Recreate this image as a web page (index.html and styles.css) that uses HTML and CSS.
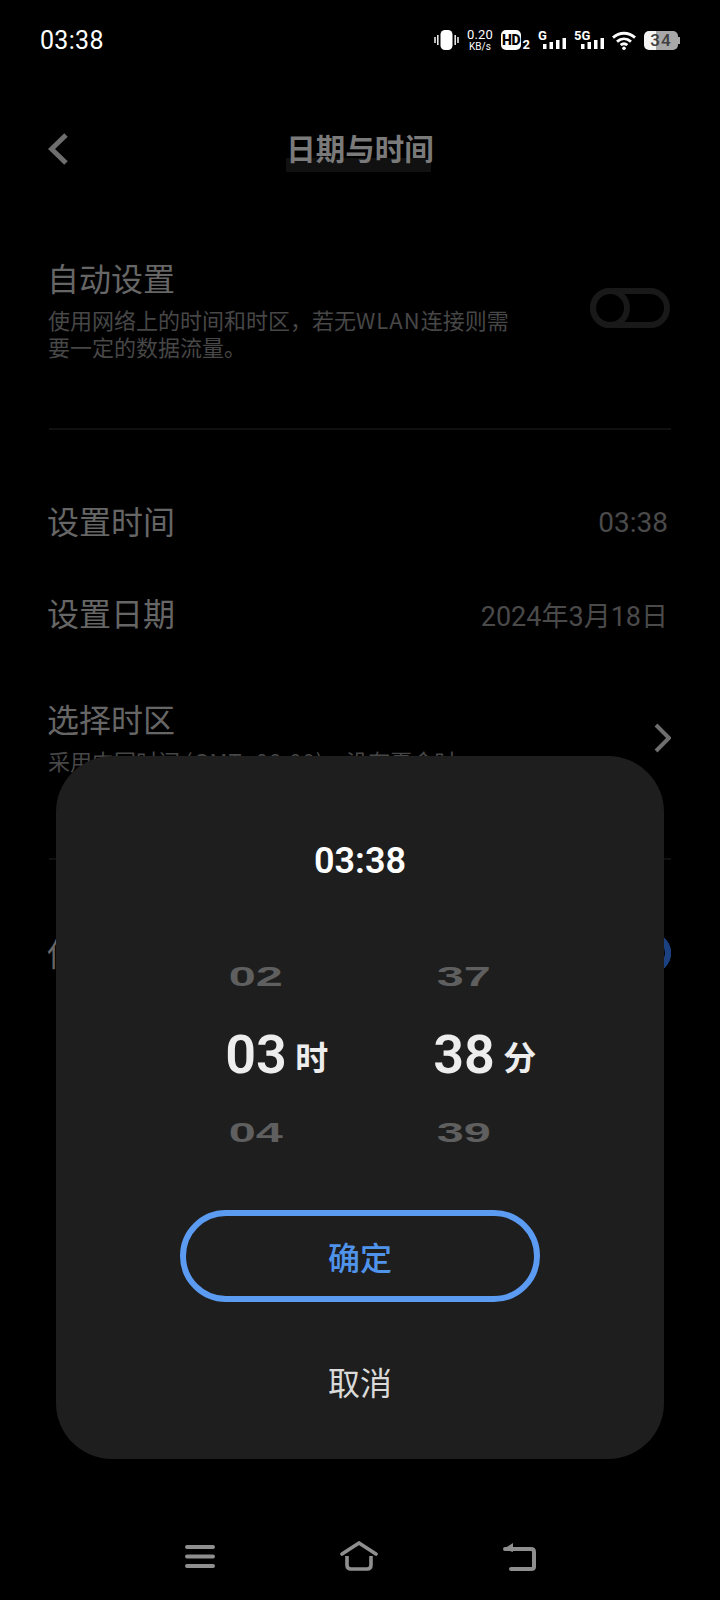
FILE: index.html
```html
<!DOCTYPE html>
<html lang="zh-CN">
<head>
<meta charset="utf-8">
<title>日期与时间</title>
<link rel="stylesheet" href="styles.css">
</head>
<body>
<div class="phone">
  <header class="status">
    <span class="clock">03:38</span>
    <div class="status-icons">
      <svg width="25" height="20" viewBox="0 0 25 20"><rect x="6.500" y="0" width="12" height="20" rx="4.500" fill="#fff"/><path d="M1 7v6M3.800 5v10M21.200 5v10M24 7v6" stroke="#e6e6e6" stroke-width="1.600" fill="none"/></svg>
      <div class="speed"><span class="speed-num">0.20</span><span class="speed-unit">KB/s</span></div>
      <div class="hd"><span class="hd-badge">HD</span><span class="hd-sim">2</span></div>
      <svg width="28" height="24" viewBox="0 -2 28 24"><text class="sig-label" x="0" y="10">G</text><path d="M5 14h3.500v5H5zM11.500 12H15v7h-3.500zM18 10h3.500v9H18zM24.500 8H28v11h-3.500z" fill="#fff"/></svg>
      <svg width="30" height="24" viewBox="0 -2 30 24"><text class="sig-label" x="0" y="10">5G</text><path d="M7 14h3.500v5H7zM13.500 12H17v7h-3.500zM20 10h3.500v9H20zM26.500 8H30v11h-3.500z" fill="#fff"/></svg>
      <svg width="24" height="19" viewBox="0 0 24 19"><g fill="none" stroke="#fff" stroke-width="2.800"><path d="M1 6.600C7.400 .8 16.600 .8 23 6.600"/><path d="M5 10.600c4.200-3.600 9.800-3.600 14 0"/><path d="M8.600 14c2-1.500 4.800-1.500 6.800 0"/></g><circle cx="12" cy="17.200" r="1.800" fill="#fff"/></svg>
      <div class="battery"><span class="battery-level">34</span></div>
    </div>
  </header>

  <div class="topbar">
    <svg class="back" width="20" height="32" viewBox="0 0 20 32"><path d="M18 2 3.500 16 18 30" fill="none" stroke="#6e6e6e" stroke-width="5"/></svg>
    <h1 class="page-title">日期与时间</h1>
  </div>

  <main class="settings">
    <section class="group group-auto">
      <div class="row-auto">
        <div>
          <div class="row-label">自动设置</div>
          <p class="row-note">使用网络上的时间和时区&#xFF0C;若无<span class="latin">WLAN</span>连接则需<br>要一定的数据流量。</p>
        </div>
        <span class="switch"></span>
      </div>
    </section>
    <section class="group group-time">
      <div class="row-plain"><span class="row-label">设置时间</span><span class="row-value">03:38</span></div>
      <div class="row-plain"><span class="row-label">设置日期</span><span class="row-value row-date">2024年3月18日</span></div>
      <div class="row-zone">
        <div>
          <div class="row-label">选择时区</div>
          <p class="row-note">采用中国时间 <span class="latin">(GMT+08:00)</span>&#xFF0C;没有夏令时</p>
        </div>
        <svg width="17" height="30" viewBox="0 0 17 30"><path d="M2 2l13 13L2 28" fill="none" stroke="#6e6e6e" stroke-width="4"/></svg>
      </div>
    </section>
    <section class="group group-clock">
      <div class="row-plain"><span class="row-label">使用24小时制</span><span class="switch switch-on"></span></div>
    </section>
  </main>

  <nav class="navbar">
    <svg width="30" height="24" viewBox="0 0 30 24"><path d="M2 3h26M2 12.500h26M2 22h26" stroke="#8f8f8f" stroke-width="4" stroke-linecap="round" fill="none"/></svg>
    <svg width="38" height="30" viewBox="0 0 38 30"><path d="M2 13 19 2l17 11" fill="none" stroke="#8f8f8f" stroke-width="3.600" stroke-linecap="round"/><path d="M7 15v9q0 4 4 4h16q4 0 4-4v-9" fill="none" stroke="#8f8f8f" stroke-width="3.600"/></svg>
    <svg width="34" height="30" viewBox="0 0 34 30"><path d="M3 8h26q3 0 3 3v15q0 2-3 2H9" fill="none" stroke="#8f8f8f" stroke-width="4" stroke-linecap="round"/><path d="M11 2 1.500 8l9.500 3z" fill="#8f8f8f"/></svg>
  </nav>

  <div class="dialog">
    <div class="dialog-title">03:38</div>
    <div class="wheel">
      <div class="wheel-col">
        <span class="wheel-side">02</span>
        <span class="wheel-main">03<span class="wheel-unit">时</span></span>
        <span class="wheel-side">04</span>
      </div>
      <div class="wheel-col">
        <span class="wheel-side">37</span>
        <span class="wheel-main">38<span class="wheel-unit">分</span></span>
        <span class="wheel-side">39</span>
      </div>
    </div>
    <button class="btn-ok">确定</button>
    <button class="btn-cancel">取消</button>
  </div>
</div>
</body>
</html>
```
FILE: styles.css
```css
*, *::before, *::after { box-sizing: border-box; margin: 0; padding: 0; }

html, body { background: #000; }

body {
  font-family: Roboto, "Noto Sans CJK SC", sans-serif;
}

.phone {
  position: relative;
  width: 720px;
  height: 1600px;
  overflow: hidden;
  background: #000;
  display: flex;
  flex-direction: column;
}

/* Status bar */
.status {
  height: 80px;
  flex: none;
  padding: 0 40px;
  display: flex;
  align-items: center;
  justify-content: space-between;
}

.clock {
  color: #fff;
  font-size: 25px;
  font-weight: 450;
  letter-spacing: .3px;
}

.status-icons {
  display: flex;
  align-items: center;
  gap: 8px;
  color: #fff;
}

.speed {
  width: 26px;
  display: flex;
  flex-direction: column;
  align-items: center;
  line-height: 1;
}

.speed-num { font-size: 13px; letter-spacing: .2px; }
.speed-unit { font-size: 10px; margin-top: 1px; }

.hd {
  width: 29px;
  display: flex;
  align-items: flex-end;
  justify-content: space-between;
}

.hd-badge {
  width: 20px;
  height: 20px;
  border-radius: 5px;
  background: #fff;
  color: #000;
  font-size: 14px;
  font-weight: 900;
  line-height: 20px;
  text-align: center;
  letter-spacing: -.5px;
}

.hd-sim { font-size: 13px; font-weight: 700; line-height: 10px; }

.sig-label {
  fill: #fff;
  font-family: Roboto, sans-serif;
  font-size: 13px;
  font-weight: 700;
}

.battery {
  position: relative;
  width: 34px;
  height: 19px;
  margin-right: 2px;
  border-radius: 5px;
  background: linear-gradient(90deg, #f4f4f4 36%, #a8a8a8 36%);
  color: #3f3f3f;
  font-size: 17px;
  font-weight: 500;
  line-height: 19px;
  text-align: center;
  letter-spacing: 1px;
}

.battery::after {
  content: "";
  position: absolute;
  right: -2px;
  top: 6px;
  width: 2px;
  height: 7px;
  background: #a8a8a8;
}

/* Page header */
.topbar {
  height: 138px;
  flex: none;
  position: relative;
  isolation: isolate;
  display: flex;
  align-items: center;
  justify-content: center;
}

.back {
  position: absolute;
  left: 48px;
  top: 53px;
}

.page-title {
  position: relative;
  padding-top: 2px;
  color: #7a7a7a;
  font-size: 29.500px;
  font-weight: 700;
  line-height: 40px;
}

.page-title::after {
  content: "";
  position: absolute;
  left: 0;
  right: 3px;
  top: 30px;
  height: 14px;
  background: #111;
  z-index: -1;
}

/* Settings list */
.settings {
  flex: 1;
  padding: 0 49px;
}

.group { border-bottom: 2px solid #101010; }

.group-auto { padding: 40px 0 68px; }
.group-time { padding-top: 45px; height: 430px; }
.group-clock { padding-top: 47px; border-bottom: 0; }

.row-auto,
.row-zone {
  display: flex;
  justify-content: space-between;
  align-items: center;
}

.row-auto { padding-right: 1px; }

.row-label {
  margin: 0 0 -2px -2px;
  padding-top: 2px;
  color: #666;
  font-size: 32px;
  line-height: 40px;
}

.row-note {
  margin: 8px 0 0 -1px;
  color: #474747;
  font-family: "Noto Sans CJK SC", sans-serif;
  font-size: 22px;
  line-height: 27px;
  white-space: nowrap;
}

.latin { letter-spacing: 1px; }

.row-plain {
  height: 92px;
  display: flex;
  justify-content: space-between;
  align-items: center;
}

.row-value {
  margin-right: 3px;
  padding-top: 2px;
  color: #4a4a4a;
  font-size: 28px;
}

.row-date { font-size: 27px; }

.row-zone { padding-top: 40px; }
.row-zone svg { margin-top: 2px; }

.switch {
  position: relative;
  display: block;
  width: 80px;
  height: 40px;
  border: 6px solid #191919;
  border-radius: 20px;
}

.row-auto .switch { margin-top: -2px; }

.switch::before {
  content: "";
  position: absolute;
  left: -6px;
  top: -6px;
  width: 40px;
  height: 40px;
  border: 6px solid #191919;
  border-radius: 50%;
}

.switch-on { border-color: #1c4180; }
.switch-on::before { left: auto; right: -6px; border-color: #1c4180; }

/* Bottom navigation */
.navbar {
  height: 100px;
  flex: none;
  padding: 41px 184px 29px 185px;
  display: flex;
  justify-content: space-between;
  align-items: center;
}

/* Time picker dialog */
.dialog {
  position: absolute;
  left: 56px;
  top: 756px;
  width: 608px;
  height: 703px;
  border-radius: 56px;
  background: #1e1e1e;
  display: flex;
  flex-direction: column;
  align-items: center;
}

.dialog-title {
  margin-top: 81px;
  color: #fff;
  font-size: 36px;
  font-weight: 600;
  line-height: 48px;
}

.wheel {
  margin-top: 73px;
  width: 416px;
  display: grid;
  grid-template-columns: 208px 208px;
}

.wheel-col {
  display: flex;
  flex-direction: column;
  align-items: center;
}

.wheel-side {
  height: 36px;
  color: #5f5f5f;
  font-family: "Liberation Sans", sans-serif;
  font-size: 30px;
  font-weight: 700;
  line-height: 36px;
  transform: scale(1.62, .95);
}

.wheel-main {
  position: relative;
  height: 78px;
  margin: 21px 0;
  color: #ededed;
  font-size: 54px;
  font-weight: 600;
  line-height: 80px;
}

.wheel-unit {
  position: absolute;
  left: 70px;
  top: 4px;
  width: 34px;
  font-size: 33px;
  font-weight: 600;
  white-space: nowrap;
}

.btn-ok,
.btn-cancel {
  font-family: inherit;
  background: none;
  font-size: 32px;
}

.btn-ok {
  margin-top: 60px;
  width: 360px;
  height: 92px;
  border: 6px solid #5b9cf2;
  border-radius: 46px;
  color: #4f93ea;
  font-weight: 500;
}

.btn-cancel {
  margin-top: 49px;
  height: 60px;
  border: 0;
  color: #dadada;
  font-weight: 400;
}
```
